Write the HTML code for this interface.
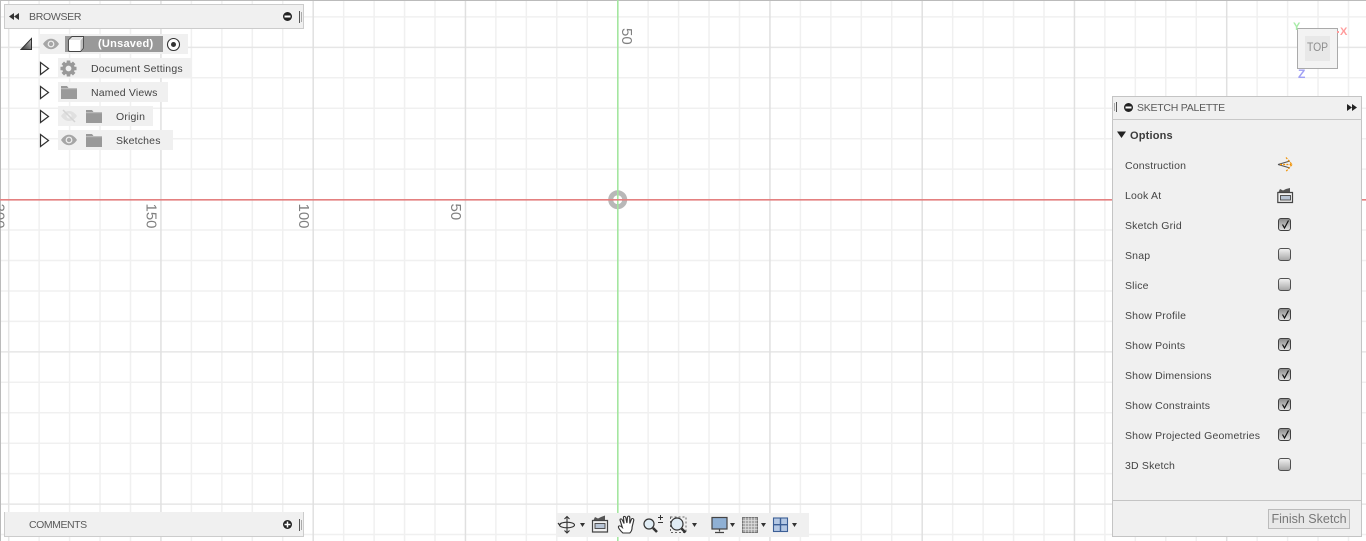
<!DOCTYPE html>
<html><head><meta charset="utf-8"><style>
html,body{margin:0;padding:0;width:1366px;height:541px;overflow:hidden;background:#fff}
body{position:relative;font-family:"Liberation Sans",sans-serif;color:#444}
.a{position:absolute}
.panel{background:#f0f0f0;box-sizing:border-box}
.t{position:absolute;white-space:nowrap;font-size:10.5px;letter-spacing:.18px;line-height:14px;color:#444;margin-top:1px}
.chip{position:absolute;background:#f0f0f0;height:20px}
.cb{position:absolute;left:1278px;width:13px;height:13px;box-sizing:border-box;border:1px solid #505050;border-radius:3px;background:linear-gradient(#f0f0f0,#a8a8a8)}
.cb.on{background:linear-gradient(#8c8c8c,#e0e0e0);border-color:#404040}
.cb svg{position:absolute;left:1px;top:0}
svg{position:absolute;overflow:visible}
</style></head><body>

<svg width="1366" height="541" style="left:0;top:0">
<path fill="none" stroke="#f0f0f0" stroke-width="1.5" d="M39.15 0V541M69.6 0V541M100.05 0V541M130.5 0V541M191.4 0V541M221.85 0V541M252.3 0V541M282.75 0V541M343.65 0V541M374.1 0V541M404.55 0V541M435 0V541M495.9 0V541M526.35 0V541M556.8 0V541M587.25 0V541M648.15 0V541M678.6 0V541M709.05 0V541M739.5 0V541M800.4 0V541M830.85 0V541M861.3 0V541M891.75 0V541M952.65 0V541M983.1 0V541M1013.55 0V541M1044 0V541M1104.9 0V541M1135.35 0V541M1165.8 0V541M1196.25 0V541M1257.15 0V541M1287.6 0V541M1318.05 0V541M1348.5 0V541M0 16.9H1366M0 77.8H1366M0 108.25H1366M0 138.7H1366M0 169.15H1366M0 230.05H1366M0 260.5H1366M0 290.95H1366M0 321.4H1366M0 382.3H1366M0 412.75H1366M0 443.2H1366M0 473.65H1366M0 534.55H1366"/>
<path fill="none" stroke="#e6e6e6" stroke-width="1.5" d="M8.7 0V541M0 47.35H1366M0 351.85H1366M0 504.1H1366"/>
<path fill="none" stroke="#e0e0e0" stroke-width="1.5" d="M160.95 0V541M313.2 0V541M465.45 0V541M769.95 0V541M922.2 0V541M1074.45 0V541M1226.7 0V541"/>
<path stroke="#bbb" stroke-width="1" d="M0 .5H1366M.5 0V541"/>
<circle cx="617.7" cy="199.7" r="7" fill="#fff" stroke="#b8b8b8" stroke-width="5"/>
<path stroke="#a4e6a0" stroke-width="1.6" d="M617.8 0V541"/>
<path stroke="#e48080" stroke-width="1.6" d="M0 199.8H1366"/>
<g font-family="Liberation Sans" font-size="15" fill="#808080">
<text transform="translate(622 28) rotate(90)">50</text>
<text transform="translate(451 203.500) rotate(90)">50</text>
<text transform="translate(299 203.500) rotate(90)">100</text>
<text transform="translate(146.500 203.500) rotate(90)">150</text>
<text transform="translate(-5.500 203.500) rotate(90)">200</text>
</g>
</svg>

<!-- Browser -->
<div class="a panel" style="left:4px;top:4px;width:300px;height:25px;border:1px solid #ccc"></div>
<svg width="14" height="8" style="left:9px;top:13px"><path fill="#333" d="M0 3.500L5 0V7ZM5 3.500L10 0V7Z"/></svg>
<div class="t" style="left:29px;top:9px;color:#5a5a5a;letter-spacing:-.3px">BROWSER</div>
<svg width="12" height="12" style="left:282px;top:11px"><circle cx="5.500" cy="5.500" r="4.500" fill="#222"/><rect x="2.500" y="4.500" width="6" height="2" fill="#fff"/></svg>
<svg width="6" height="14" style="left:299px;top:11px"><path stroke="#555" d="M.5 0V12"/><path stroke="#aaa" d="M2.500 1V11"/></svg>

<svg width="14" height="14" style="left:20px;top:37px"><defs><linearGradient id="g" x1="0" x2="1" y1="1" y2="0"><stop offset="0" stop-color="#333"/><stop offset="1" stop-color="#c4c4c4"/></linearGradient></defs><path fill="url(#g)" stroke="#333" d="M1 12.500L11.500 1.500V12.500Z"/></svg>
<div class="chip" style="left:40px;top:34px;width:148px"></div>
<div class="a" style="left:65px;top:36px;width:98px;height:16px;background:#999"></div>
<svg width="18" height="12" style="left:43px;top:38px"><path fill="#a6a6a6" d="M0 6C3 1.500 6 .8 8 .8S13 1.500 16 6C13 10.500 10 11.200 8 11.200S3 10.500 0 6Z"/><circle cx="8" cy="6" r="3.400" fill="#f0f0f0"/><circle cx="8" cy="6" r="2.200" fill="#a6a6a6"/></svg>
<svg width="18" height="18" style="left:67px;top:35px"><path fill="#fff" stroke="#444" stroke-width=".9" d="M1.500 5L5 1.500H16.500V13L13.500 16.500H3Q1.500 16.500 1.500 15Z"/><path fill="#e2e2e2" d="M2 5L5.200 2H16L13 5Z"/><path fill="#bcbcbc" d="M13.500 5.400L16 2.500V12.800L13.500 16Z"/></svg>
<div class="t" style="left:98px;top:36px;color:#fff;font-weight:bold;font-size:11px;letter-spacing:.25px">(Unsaved)</div>
<svg width="16" height="16" style="left:166px;top:37px"><circle cx="7.500" cy="7.500" r="6" fill="#fff" stroke="#333" stroke-width="1.100"/><circle cx="7.500" cy="7.500" r="2.500" fill="#333"/></svg>

<svg width="12" height="16" style="left:39px;top:61px"><path fill="#fff" stroke="#333" stroke-width="1.200" d="M1.500 1.500L9.500 7.500L1.500 13.500Z"/></svg>
<svg width="12" height="16" style="left:39px;top:85px"><path fill="#fff" stroke="#333" stroke-width="1.200" d="M1.500 1.500L9.500 7.500L1.500 13.500Z"/></svg>
<svg width="12" height="16" style="left:39px;top:109px"><path fill="#fff" stroke="#333" stroke-width="1.200" d="M1.500 1.500L9.500 7.500L1.500 13.500Z"/></svg>
<svg width="12" height="16" style="left:39px;top:133px"><path fill="#fff" stroke="#333" stroke-width="1.200" d="M1.500 1.500L9.500 7.500L1.500 13.500Z"/></svg>

<div class="chip" style="left:58px;top:58px;width:133px"></div>
<svg width="18" height="18" style="left:60px;top:59.500px"><path fill="none" stroke="#999" stroke-width="3.600" d="M8.500 .5V16.500M.5 8.500H16.500M2.800 2.800L14.200 14.200M14.200 2.800L2.800 14.200"/><circle cx="8.500" cy="8.500" r="6.200" fill="#999"/><circle cx="8.500" cy="8.500" r="2.900" fill="#f0f0f0"/></svg>
<div class="t" style="left:91px;top:61px">Document Settings</div>

<div class="chip" style="left:58px;top:82px;width:110px"></div>
<svg width="18" height="14" style="left:60px;top:85px"><path fill="#999" d="M1 1H7L8.500 3H17V14H1Z"/><path stroke="#ddd" stroke-width=".6" d="M1 3.800H17"/></svg>
<div class="t" style="left:91px;top:85px">Named Views</div>

<div class="chip" style="left:58px;top:106px;width:95px"></div>
<svg width="18" height="14" style="left:60px;top:110px"><path fill="#e0e0e0" d="M1 6C4 1.500 7 1 9 1S14 1.500 17 6C14 10.500 11 11 9 11S4 10.500 1 6Z"/><circle cx="9" cy="6" r="2.500" fill="#f0f0f0"/><path stroke="#d4d4d4" stroke-width="1.500" d="M3 0L15 12"/></svg>
<svg width="18" height="14" style="left:85px;top:109px"><path fill="#999" d="M1 1H7L8.500 3H17V14H1Z"/><path stroke="#ddd" stroke-width=".6" d="M1 3.800H17"/></svg>
<div class="t" style="left:116px;top:109px">Origin</div>

<div class="chip" style="left:58px;top:130px;width:115px"></div>
<svg width="18" height="12" style="left:60px;top:134px"><path fill="#a6a6a6" d="M1 6C4 1.500 7 .8 9 .8S14 1.500 17 6C14 10.500 11 11.200 9 11.200S4 10.500 1 6Z"/><circle cx="9" cy="6" r="3.400" fill="#f0f0f0"/><circle cx="9" cy="6" r="2.200" fill="#a6a6a6"/></svg>
<svg width="18" height="14" style="left:85px;top:133px"><path fill="#999" d="M1 1H7L8.500 3H17V14H1Z"/><path stroke="#ddd" stroke-width=".6" d="M1 3.800H17"/></svg>
<div class="t" style="left:116px;top:133px">Sketches</div>

<!-- Comments -->
<div class="a panel" style="left:4px;top:512px;width:300px;height:25px;border-left:1px solid #ccc;border-bottom:1px solid #ccc;border-right:1px solid #ccc"></div>
<div class="t" style="left:29px;top:517px;color:#5a5a5a;letter-spacing:-.45px">COMMENTS</div>
<svg width="12" height="12" style="left:282px;top:519px"><circle cx="5.500" cy="5.500" r="4.500" fill="#222"/><path stroke="#fff" stroke-width="1.500" d="M2.500 5.500H8.500M5.500 2.500V8.500"/></svg>
<svg width="6" height="14" style="left:299px;top:519px"><path stroke="#555" d="M.5 0V12"/><path stroke="#aaa" d="M2.500 1V11"/></svg>

<!-- View cube -->
<div class="a" style="left:1297px;top:28px;width:41px;height:41px;box-sizing:border-box;border:1px solid #aaa;background:#f3f3f3"></div>
<div class="a" style="left:1305px;top:36px;width:25px;height:25px;background:#e8e8e8"></div>
<div class="a" style="left:1305px;top:42px;width:25px;text-align:center;font-size:11.500px;line-height:13px;color:#8e8e8e;transform:scaleX(.9)">TOP</div>
<div class="a" style="left:1293px;top:21px;font-size:11px;line-height:13px;color:#a8eca8;font-weight:bold">Y</div>
<div class="a" style="left:1340px;top:26px;font-size:11px;line-height:13px;color:#ff9c9c;font-weight:bold">X</div>
<div class="a" style="left:1298px;top:67px;font-size:12px;line-height:14px;color:#a0a0f4;font-weight:bold">Z</div>
<div class="a" style="left:1337px;top:31px;width:2px;height:2px;background:#ff9c9c"></div>

<!-- Sketch palette -->
<div class="a panel" style="left:1112px;top:96px;width:250px;height:441px;border:1px solid #c4c4c4"></div>
<div class="a" style="left:1112px;top:119px;width:250px;height:1px;background:#c8c8c8"></div>
<div class="a" style="left:1112px;top:500px;width:250px;height:1px;background:#c4c4c4"></div>
<svg width="6" height="12" style="left:1114px;top:102px"><path stroke="#aaa" d="M.5 1V9"/><path stroke="#555" d="M2.500 0V10"/></svg>
<svg width="12" height="12" style="left:1123px;top:102px"><circle cx="5.500" cy="5.500" r="4.500" fill="#222"/><rect x="2.500" y="4.500" width="6" height="2" fill="#fff"/></svg>
<div class="t" style="left:1137px;top:100px;color:#5a5a5a;letter-spacing:-.25px">SKETCH PALETTE</div>
<svg width="12" height="8" style="left:1347px;top:104px"><path fill="#222" d="M0 0L5 3.500L0 7ZM5 0L10 3.500L5 7Z"/></svg>
<svg width="10" height="8" style="left:1117px;top:131px"><path fill="#222" d="M0 .5H9L4.500 7Z"/></svg>
<div class="t" style="left:1130px;top:128px;font-weight:bold;font-size:11px;color:#3c3c3c">Options</div>

<div class="t" style="left:1125px;top:158px">Construction</div>
<div class="t" style="left:1125px;top:188px">Look At</div>
<div class="t" style="left:1125px;top:218px">Sketch Grid</div>
<div class="t" style="left:1125px;top:248px">Snap</div>
<div class="t" style="left:1125px;top:278px">Slice</div>
<div class="t" style="left:1125px;top:308px">Show Profile</div>
<div class="t" style="left:1125px;top:338px">Show Points</div>
<div class="t" style="left:1125px;top:368px">Show Dimensions</div>
<div class="t" style="left:1125px;top:398px">Show Constraints</div>
<div class="t" style="left:1125px;top:428px">Show Projected Geometries</div>
<div class="t" style="left:1125px;top:458px">3D Sketch</div>

<svg width="18" height="18" style="left:1277px;top:156px"><path fill="none" stroke="#555" stroke-width="1.100" d="M1 8.500L13 5M1 8.500L13 12"/><path fill="none" stroke="#f09000" stroke-width="1.200" stroke-dasharray="2 1.200" d="M3 8.500H16M9 1.500L15 8.500L9 15.500"/></svg>
<svg width="18" height="18" style="left:1277px;top:187px"><path fill="none" stroke="#444" stroke-width="1.200" d="M.8 5.500H15.500V15.500H.8Z"/><rect x="3.500" y="8.500" width="10" height="4.500" fill="#b8c4d4" stroke="#444" stroke-width=".9"/><path fill="#555" d="M1.500 5L3 2L6 3.500L9 2L13 1V5Z"/></svg>

<div class="cb on" style="top:218px"><svg width="11" height="11"><path fill="none" stroke="#111" stroke-width="1.200" d="M2.500 5.500L4.500 9L8.500 1.500"/></svg></div>
<div class="cb" style="top:248px"></div>
<div class="cb" style="top:278px"></div>
<div class="cb on" style="top:308px"><svg width="11" height="11"><path fill="none" stroke="#111" stroke-width="1.200" d="M2.500 5.500L4.500 9L8.500 1.500"/></svg></div>
<div class="cb on" style="top:338px"><svg width="11" height="11"><path fill="none" stroke="#111" stroke-width="1.200" d="M2.500 5.500L4.500 9L8.500 1.500"/></svg></div>
<div class="cb on" style="top:368px"><svg width="11" height="11"><path fill="none" stroke="#111" stroke-width="1.200" d="M2.500 5.500L4.500 9L8.500 1.500"/></svg></div>
<div class="cb on" style="top:398px"><svg width="11" height="11"><path fill="none" stroke="#111" stroke-width="1.200" d="M2.500 5.500L4.500 9L8.500 1.500"/></svg></div>
<div class="cb on" style="top:428px"><svg width="11" height="11"><path fill="none" stroke="#111" stroke-width="1.200" d="M2.500 5.500L4.500 9L8.500 1.500"/></svg></div>
<div class="cb" style="top:458px"></div>

<div class="a" style="left:1268px;top:509px;width:82px;height:20px;box-sizing:border-box;border:1px solid #bbb;background:#e8e8e8;color:#777;font-size:12.500px;line-height:18px;text-align:center">Finish Sketch</div>

<!-- Toolbar -->
<div class="a" style="left:557px;top:513px;width:252px;height:24px;background:#f0f0f0"></div>
<svg width="260" height="26" style="left:555px;top:512px">
<g fill="none" stroke="#333" stroke-width="1.100">
<path d="M12 5V21M9.500 7L12 4.500L14.500 7M9.500 18.500L12 21L14.500 18.500"/>
<ellipse cx="12" cy="13" rx="7.500" ry="2.800"/>
<path d="M4.500 13L3 11M4.500 13L6.500 11"/>
</g>
<path fill="#333" d="M25 11H30L27.500 15Z"/>
<path fill="none" stroke="#444" stroke-width="1.200" d="M37.500 8.500H52.500V20H37.500Z"/>
<rect x="40" y="11.500" width="10" height="5" fill="#b8c4d4" stroke="#444" stroke-width=".9"/>
<path fill="#555" d="M38.500 8L40 5L43 6.500L46 5L50 3.500V8Z"/>
<path transform="translate(-8 0) scale(1.150 1)" fill="#fff" stroke="#333" stroke-width="1" d="M66 21C64 19 61 15 62.500 14C64 13.500 65 15 65.500 15.500L63.500 8C63.500 6.500 65 6.500 65.500 8L67 11.500L66.500 5.500C66.500 4 68 4 68.500 5.500L69.500 11L70 5C70.500 3.500 72 4 72 5.500L72 11.500L73.500 7C74 6 75.500 6.500 75.500 8L74 15C74 18 73 20 72 21Z"/>
<circle cx="94" cy="12" r="5" fill="#e0ecf4" stroke="#333" stroke-width="1.200"/>
<path stroke="#333" stroke-width="2.600" d="M98 16L102 20"/>
<path stroke="#333" d="M103 5.500H108M105.500 3V8M103 10.500H108"/>
<rect x="115.500" y="5" width="15.500" height="15.500" fill="none" stroke="#666" stroke-dasharray="2 2"/>
<circle cx="122" cy="12" r="6" fill="#e0ecf4" stroke="#333" stroke-width="1.200"/>
<path stroke="#333" stroke-width="2.600" d="M126.500 16.500L130.500 20.500"/>
<path fill="#333" d="M137 11H142L139.500 15Z"/>
<rect x="157" y="5.500" width="15" height="11.500" fill="#8fb0d4" stroke="#444" stroke-width="1.200"/>
<path stroke="#444" stroke-width="1.200" d="M164.500 17V19.500M160 20.500H169"/>
<path fill="#333" d="M175 11H180L177.500 15Z"/>
<rect x="187.500" y="5.500" width="15" height="15" fill="#aaa" stroke="#777"/>
<path stroke="#e0e0e0" stroke-width=".7" d="M190.500 5.500V20.500M193.500 5.500V20.500M196.500 5.500V20.500M199.500 5.500V20.500M187.500 8.500H202.500M187.500 11.500H202.500M187.500 14.500H202.500M187.500 17.500H202.500"/>
<path fill="#333" d="M206 11H211L208.500 15Z"/>
<rect x="218.500" y="6" width="14" height="13.500" fill="#b4c8e4" stroke="#3c5f96" stroke-width="1.100"/>
<path stroke="#3c5f96" stroke-width="1.400" d="M225.500 6V19.500M218.500 12.700H232.500"/>
<path fill="#333" d="M237 11H242L239.500 15Z"/>
</svg>
</body></html>
